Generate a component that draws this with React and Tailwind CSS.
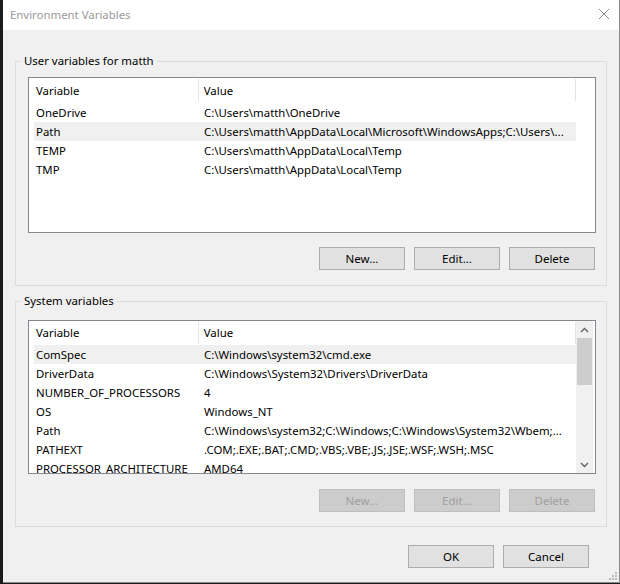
import React from "react";

const font = { fontFamily: '"Segoe UI", "Noto Sans", sans-serif' };

const userVars = [
  ["OneDrive", "C:\\Users\\matth\\OneDrive"],
  ["Path", "C:\\Users\\matth\\AppData\\Local\\Microsoft\\WindowsApps;C:\\Users\\..."],
  ["TEMP", "C:\\Users\\matth\\AppData\\Local\\Temp"],
  ["TMP", "C:\\Users\\matth\\AppData\\Local\\Temp"],
];

const systemVars = [
  ["ComSpec", "C:\\Windows\\system32\\cmd.exe"],
  ["DriverData", "C:\\Windows\\System32\\Drivers\\DriverData"],
  ["NUMBER_OF_PROCESSORS", "4"],
  ["OS", "Windows_NT"],
  ["Path", "C:\\Windows\\system32;C:\\Windows;C:\\Windows\\System32\\Wbem;..."],
  ["PATHEXT", ".COM;.EXE;.BAT;.CMD;.VBS;.VBE;.JS;.JSE;.WSF;.WSH;.MSC"],
  ["PROCESSOR_ARCHITECTURE", "AMD64"],
];

const Button = ({ children, disabled }) => (
  <button
    type="button"
    className={`w-[86px] h-[23px] border text-[11.5px] leading-none ${
      disabled
        ? "bg-[#cccccc] border-[#bfbfbf] text-[#a0a0a0]"
        : "bg-[#e1e1e1] border-[#adadad] text-black"
    }`}
  >
    {children}
  </button>
);

const Rows = ({ rows, selected, headerH }) => (
  <div className="pl-[5px] w-[547px]">
    {/* header */}
    <div className={`flex ${headerH} items-center`}>
      <div className="w-[164px] h-full flex items-center pl-[2px]">Variable</div>
      <div className="w-px h-[22px] self-start mt-[1px] bg-[#e5e5e5]" />
      <div className="w-[377px] h-full flex items-center pl-[5px]">Value</div>
      <div className="w-px h-[22px] self-start mt-[1px] bg-[#e5e5e5]" />
    </div>
    {rows.map(([name, value], i) => (
      <div
        key={name}
        className={`flex h-[19px] items-center w-[542px] ${
          i === selected ? "bg-[#f0f0f0]" : ""
        }`}
      >
        <div className="w-[165px] pl-[2px] whitespace-nowrap overflow-hidden">{name}</div>
        <div className="flex-1 pl-[5px] whitespace-nowrap overflow-hidden">{value}</div>
      </div>
    ))}
  </div>
);

export default function App() {
  return (
    <div className="w-[620px] h-[584px] bg-[#1b1b1b] flex text-black text-[11.4px]" style={font}>
      <div className="ml-[3px] w-[617px] h-[583px] bg-[#f0f0f0] border-r border-b border-[#8a8a8a] flex flex-col relative">
        {/* title bar */}
        <div className="h-[30px] bg-white flex items-center justify-between pl-[7px] pr-[9px] shrink-0">
          <span className="text-[#999999]">Environment Variables</span>
          <svg width="12" height="12" viewBox="0 0 12 12" className="mt-[-2px]">
            <path d="M1 1 L11 11 M11 1 L1 11" stroke="#8c8c8c" strokeWidth="1" />
          </svg>
        </div>

        {/* user variables */}
        <fieldset className="ml-[12px] w-[592px] mt-[23px] border border-[#dcdcdc] pb-[15px]">
          <legend className="ml-[5px] px-[3px] leading-[16px]">User variables for matth</legend>
          <div className="pl-[12px] pr-[10px]">
            <div className="mt-[8px] h-[156px] border border-[#828790] bg-white">
              <Rows rows={userVars} selected={1} headerH="h-[25px]" />
            </div>
            <div className="mt-[14px] flex justify-end gap-[9px] pr-[1px]">
              <Button>New...</Button>
              <Button>Edit...</Button>
              <Button>Delete</Button>
            </div>
          </div>
        </fieldset>

        {/* system variables */}
        <fieldset className="ml-[12px] w-[592px] mt-[7px] border border-[#dcdcdc] pb-[14px]">
          <legend className="ml-[5px] px-[3px] leading-[16px]">System variables</legend>
          <div className="pl-[12px] pr-[10px]">
            <div className="mt-[11px] h-[154px] border border-[#828790] bg-white flex overflow-hidden">
              <div className="flex-1 overflow-hidden">
                <Rows rows={systemVars} selected={0} headerH="h-[24px]" />
              </div>
              <div className="w-[17px] mr-[2px] bg-[#f0f0f0] flex flex-col items-center">
                <div className="h-[17px] w-full flex items-center justify-center">
                  <svg width="9" height="6" viewBox="0 0 9 6">
                    <path d="M1 5 L4.5 1.5 L8 5" fill="none" stroke="#606060" strokeWidth="1.4" />
                  </svg>
                </div>
                <div className="w-[15px] h-[47px] bg-[#cdcdcd]" />
                <div className="flex-1" />
                <div className="h-[17px] w-full flex items-center justify-center">
                  <svg width="9" height="6" viewBox="0 0 9 6">
                    <path d="M1 1 L4.5 4.5 L8 1" fill="none" stroke="#606060" strokeWidth="1.4" />
                  </svg>
                </div>
              </div>
            </div>
            <div className="mt-[15px] flex justify-end gap-[9px] pr-[1px]">
              <Button disabled>New...</Button>
              <Button disabled>Edit...</Button>
              <Button disabled>Delete</Button>
            </div>
          </div>
        </fieldset>

        {/* dialog buttons */}
        <div className="mt-[18px] flex justify-end gap-[9px] pr-[30px]">
          <Button>OK</Button>
          <Button>Cancel</Button>
        </div>

        {/* resize grip */}
        <svg width="8" height="8" viewBox="0 0 8 8" className="absolute right-[2px] bottom-[2px]">
          <rect x="6" y="0" width="2" height="2" fill="#bcbcbc" />
          <rect x="3" y="3" width="2" height="2" fill="#bcbcbc" />
          <rect x="6" y="3" width="2" height="2" fill="#bcbcbc" />
          <rect x="0" y="6" width="2" height="2" fill="#bcbcbc" />
          <rect x="3" y="6" width="2" height="2" fill="#bcbcbc" />
          <rect x="6" y="6" width="2" height="2" fill="#bcbcbc" />
        </svg>
      </div>
    </div>
  );
}
